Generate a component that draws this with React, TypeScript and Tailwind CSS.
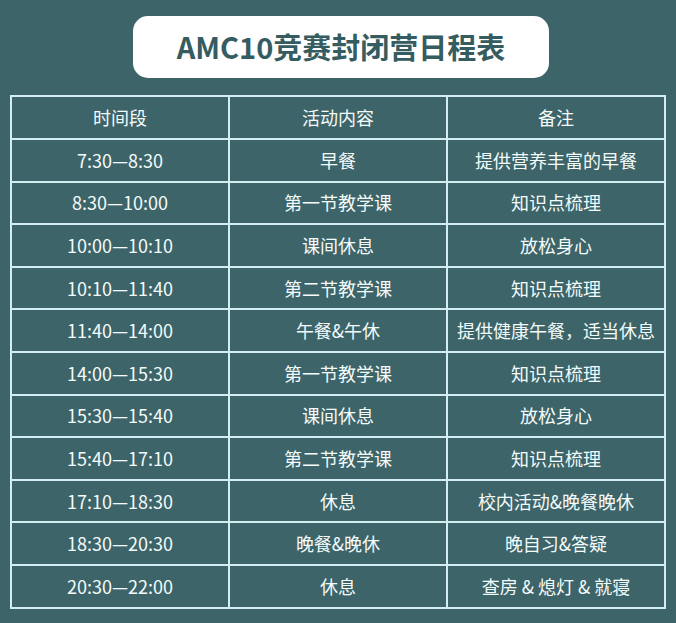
const ROWS = [
  ['7:30—8:30', '早餐', '提供营养丰富的早餐'],
  ['8:30—10:00', '第一节教学课', '知识点梳理'],
  ['10:00—10:10', '课间休息', '放松身心'],
  ['10:10—11:40', '第二节教学课', '知识点梳理'],
  ['11:40—14:00', '午餐&午休', '提供健康午餐，适当休息'],
  ['14:00—15:30', '第一节教学课', '知识点梳理'],
  ['15:30—15:40', '课间休息', '放松身心'],
  ['15:40—17:10', '第二节教学课', '知识点梳理'],
  ['17:10—18:30', '休息', '校内活动&晚餐晚休'],
  ['18:30—20:30', '晚餐&晚休', '晚自习&答疑'],
  ['20:30—22:00', '休息', '查房 & 熄灯 & 就寝'],
];

export default function App() {
  return (
    <div
      className="w-[676px] h-[623px] bg-[#3d6468] flex flex-col items-center pt-[16px]"
      style={{ fontFamily: '"Noto Sans CJK SC", "Noto Sans", sans-serif' }}
    >
      <div className="ml-[6px] w-[416px] h-[62px] bg-white rounded-[15px] flex items-center justify-center">
        <h1 className="text-[29px] font-bold text-[#355c60]">AMC10竞赛封闭营日程表</h1>
      </div>

      <table className="mt-[17px] w-[656px] border-collapse text-[18px] text-[#f4fbfb]">
        <thead>
          <tr className="h-[43px]">
            {['时间段', '活动内容', '备注'].map(h => (
              <th key={h} className="w-1/3 border-2 border-[#d3eef0] font-normal text-center">
                {h}
              </th>
            ))}
          </tr>
        </thead>
        <tbody>
          {ROWS.map(row => (
            <tr key={row[0]} className="h-[42.6px]">
              {row.map((cell, i) => (
                <td key={i} className="border-2 border-[#d3eef0] text-center whitespace-nowrap">
                  {cell}
                </td>
              ))}
            </tr>
          ))}
        </tbody>
      </table>
    </div>
  );
}
